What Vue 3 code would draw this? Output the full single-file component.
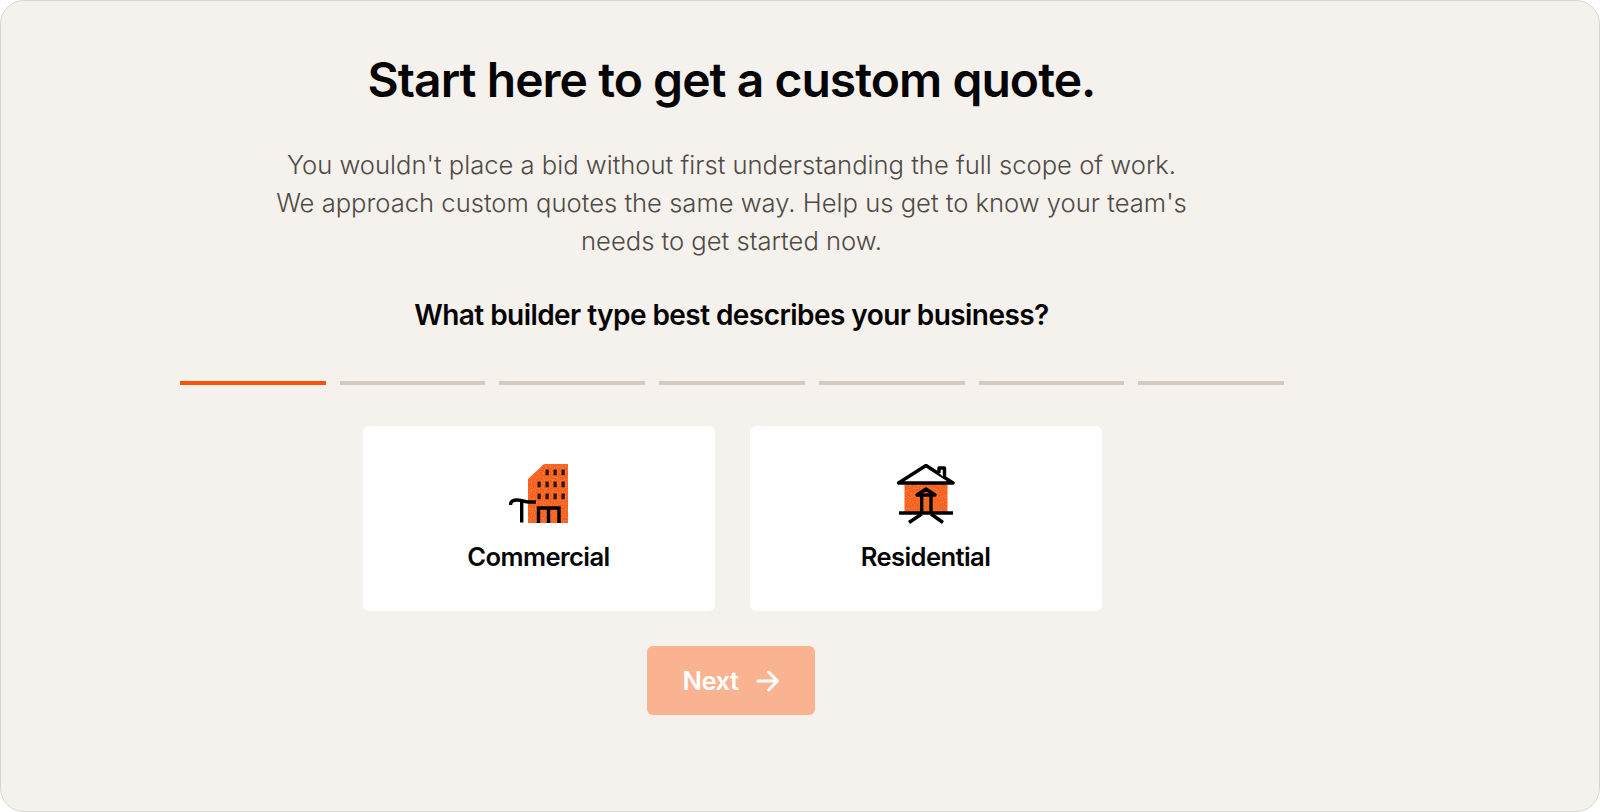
<template>
  <div class="page">
    <div class="quote-form">
      <h1>Start here to get a custom quote.</h1>
      <p class="intro">
        You wouldn't place a bid without first understanding the full scope of work.<br />
        We approach custom quotes the same way. Help us get to know your team's<br />
        needs to get started now.
      </p>
      <h2>What builder type best describes your business?</h2>

      <div class="steps">
        <span
          v-for="n in 7"
          :key="n"
          class="step"
          :class="{ active: n === currentStep }"
        ></span>
      </div>

      <div class="options">
        <button class="option">
          <svg class="option-icon" viewBox="0 0 60 60" width="60" height="60">
            <defs>
              <filter id="grain-a" x="0" y="0" width="100%" height="100%">
                <feTurbulence type="fractalNoise" baseFrequency="0.9" numOctaves="2" seed="3" />
                <feColorMatrix values="0 0 0 0 1  0 0 0 0 0.5  0 0 0 0 0.2  0 0 0 0.7 -0.28" />
                <feComposite in2="SourceGraphic" operator="in" />
                <feMerge>
                  <feMergeNode in="SourceGraphic" />
                  <feMergeNode />
                </feMerge>
              </filter>
            </defs>
            <path d="M19 15 L35 0 H59 V59 H19 Z" fill="#f65c14" filter="url(#grain-a)" />
            <g fill="#2a1508">
              <rect v-for="w in windows" :key="w[0] + '-' + w[1]" :x="w[0]" :y="w[1]" width="3.2" height="5.8" />
            </g>
            <g fill="none" stroke="#000" stroke-width="3.4">
              <path d="M1.5 41 C1.5 37 4 36 8 36 C12 36 16 38 20 38 H27" />
              <path d="M12.7 36 V58.5" />
              <path d="M29.5 59 V44 H50 V59" />
              <path d="M39.5 44 V59" />
            </g>
          </svg>
          <span>Commercial</span>
        </button>

        <button class="option">
          <svg class="option-icon" viewBox="0 0 60 60" width="60" height="60">
            <defs>
              <filter id="grain-b" x="0" y="0" width="100%" height="100%">
                <feTurbulence type="fractalNoise" baseFrequency="0.9" numOctaves="2" seed="8" />
                <feColorMatrix values="0 0 0 0 1  0 0 0 0 0.5  0 0 0 0 0.2  0 0 0 0.7 -0.28" />
                <feComposite in2="SourceGraphic" operator="in" />
                <feMerge>
                  <feMergeNode in="SourceGraphic" />
                  <feMergeNode />
                </feMerge>
              </filter>
            </defs>
            <rect x="8.5" y="19" width="43" height="30" fill="#f65c14" filter="url(#grain-b)" />
            <g fill="none" stroke="#000" stroke-width="3.4" stroke-linejoin="round">
              <path d="M2.5 19 L30 1.5 L57 19 Z" fill="#fff" />
              <path d="M43 9 V4 H48.5 V14" fill="#fff" />
              <path d="M21 31 L30 25 L39 31 Z" />
              <path d="M25.7 31 V49 M35 31 V49" />
              <path d="M3 49 H57" />
              <path d="M25.7 50 L13 58.5 M35 50 L47 58.5" />
            </g>
          </svg>
          <span>Residential</span>
        </button>
      </div>

      <button class="next" disabled>
        Next
        <svg viewBox="0 0 24 24" width="24" height="24" fill="none" stroke="#fff" stroke-width="3" stroke-linecap="round" stroke-linejoin="round">
          <path d="M2 12 H21 M12.5 3 L21.5 12 L12.5 21" />
        </svg>
      </button>
    </div>
  </div>
</template>

<script setup>
import { ref } from "vue";

const currentStep = ref(1);

// building windows, x / y in the icon's own viewBox
const windows = [
  [36.5, 5.5], [44.5, 5.5], [52.5, 5.5],
  [28.5, 17.5], [36.5, 17.5], [44.5, 17.5], [52.5, 17.5],
  [28.5, 29.5], [36.5, 29.5], [44.5, 29.5], [52.5, 29.5],
];
</script>

<style>
html,
body {
  margin: 0;
  background: #fff;
}
</style>

<style scoped>
.page {
  box-sizing: border-box;
  width: 1600px;
  height: 812px;
  padding-left: 178px;
  background: #f5f1ed;
  border: 1px solid #d9d6d2;
  border-radius: 24px;
  font-family: Inter, "Liberation Sans", sans-serif;
  overflow: hidden;
}
.quote-form {
  display: flex;
  flex-direction: column;
  align-items: center;
  width: 1105px;
}
h1 {
  margin: 49px 0 0;
  font-size: 48px;
  line-height: 60px;
  font-weight: 600;
  letter-spacing: -0.96px;
  color: #050505;
}
.intro {
  margin: 36px 0 0;
  font-size: 25.6px;
  line-height: 38px;
  font-weight: 300;
  text-align: center;
  color: #4f4a45;
}
h2 {
  margin: 35px 0 0;
  font-size: 28px;
  line-height: 40px;
  font-weight: 600;
  letter-spacing: -0.56px;
  color: #050505;
}
.steps {
  display: flex;
  align-self: flex-end;
  gap: 14px;
  width: 1104px;
  margin-top: 46px;
}
.step {
  flex: 1;
  height: 4px;
  background: #d2c9c0;
}
.step.active {
  background: #f9530b;
}
.options {
  display: flex;
  gap: 35px;
  margin-top: 41px;
  margin-left: 1px;
}
.option {
  display: flex;
  flex-direction: column;
  align-items: center;
  width: 352px;
  height: 185px;
  padding: 38px 0 0;
  background: #fff;
  border: none;
  border-radius: 6px;
  font-family: inherit;
  font-size: 25.6px;
  line-height: 34px;
  font-weight: 600;
  letter-spacing: -0.6px;
  color: #050505;
}
.option-icon {
  margin-bottom: 16px;
}
.next {
  display: flex;
  align-items: center;
  justify-content: center;
  gap: 17px;
  width: 168px;
  height: 69px;
  margin-top: 35px;
  margin-right: 1px;
  background: #fab391;
  border: none;
  border-radius: 6px;
  font-family: inherit;
  font-size: 25.6px;
  font-weight: 600;
  letter-spacing: -0.5px;
  color: #fff;
}
</style>
